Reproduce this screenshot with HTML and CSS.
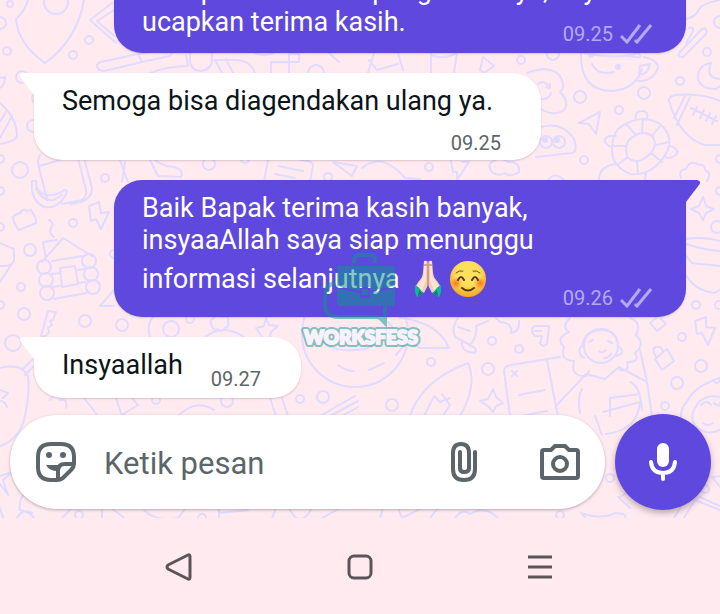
FILE: index.html
```html
<!DOCTYPE html>
<html lang="id">
<head>
  <meta charset="UTF-8" />
  <meta name="viewport" content="width=device-width, initial-scale=1.0"/>
  <title>Chat</title>
  <link rel="stylesheet" href="styles.css">
</head>
<body>
  <main class="chat">
    <!-- doodle wallpaper -->
    <svg class="wallpaper" viewBox="0 0 720 518" width="720" height="518" aria-hidden="true">
      <!-- top left: shield, box, telescope -->
      <path d="M28 0Q25 11 16 19Q18 44 45 63Q77 40 84 0"/>
      <circle cx="56" cy="2" r="12"/>
      <path d="M112 3L90 20L116 43M114 10L97 21L114 36"/>
      <path d="M101 62L138 54L142 62L104 71Q97 70 97 66Q97 63 101 62zM138 54L168 48Q174 52 170 56L142 62"/>
      <path d="M150 73Q168 66 188 66L186 55M190 53V62Q192 71 201 71Q213 69 212 58V52M215 60L222 73M226 59L233 73M215 60H235Q250 60 255 73"/>
      <path d="M271 73V62H299V54H289V73M328 52L339 62L330 54M254 53Q264 57 274 53"/>
      <path d="M0 78L5 77Q5 85 0 88M0 103Q17 118 17 136Q16 141 0 144M12 116L0 138M7 110L0 122"/>
      <path d="M40 155Q37 160 39 168L47 199M39 166L60 160M78 158L86 190Q87 196 82 200L62 204M84 158L92 188Q92 202 70 204"/>
      <path d="M32 181H36Q36 195 50 195Q58 195 64 190Q69 190 65 196Q58 209 44 207Q30 200 32 181zM36 188Q42 202 54 200L62 195"/>
      <path d="M120 160L128 182M125 162L122 182M150 160L158 176L181 177Q184 170 174 167Q162 166 155 160"/>
      <path d="M268 160L264 181M300 160Q314 161 313 166L310 181M278 166L303 171M275 174L295 178M333 162L352 176L357 166z"/>
      <!-- left: bread, bolt, log cabin -->
      <path d="M15 215L20 213Q23 208 27 211L31 210Q37 219 36 223L19 230Q13 223 13 217z"/>
      <path d="M89 206L99 202L101 213L109 212L101 229L96 219L91 221z"/>
      <path d="M49 220Q55 223 51 228Q48 233 54 237"/>
      <path d="M46 259L43 242L57 240M42 262L63 238L92 256M52 261L83 256M52 274L60 273M78 270L84 269M54 299L86 293M52 287L60 286M78 283L85 282M60 268L75 266L78 284L62 287z"/>
      <circle cx="44" cy="267" r="7"/><circle cx="89" cy="261" r="7"/><circle cx="46" cy="280" r="7"/>
      <circle cx="91" cy="274" r="7"/><circle cx="47" cy="293" r="7"/><circle cx="93" cy="287" r="7"/>
      <path d="M0 243L14 249V259Q14 267 0 266M11 265L0 282M114 290L100 306H114M114 250a4 4 0 0 0 0 8"/>
      <path d="M48 311L56 312L53 320L50 321L52 325L48 328L49 332L46 336H41z"/>
      <path d="M150 337Q146 324 153 317M205 337Q224 323 244 337"/>
      <path d="M212 325a4 4 0 0 1 2-7a4 4 0 0 1 8-1a4 4 0 0 1 6 5a4 4 0 0 1-3 6a4 4 0 0 1-7 1a4 4 0 0 1-6-4z"/>
      <path d="M266 318L269 325L278 326L271 332L270 337M266 318L264 326L256 328L262 337"/>
      <path d="M0 368Q22 363 28 376Q30 395 24 420Q18 440 0 446M22 370L34 358M25 375L38 362M0 390l8 3l-5 5M0 401q5 0 7 6"/>
      <path d="M50 400Q58 390 60 400Q68 398 66 408M84 398L98 416M116 398L122 416M132 398L138 405L120 416M178 416Q196 398 214 410M270 398L276 416M282 398L288 416M320 416L355 396M330 416L358 401M342 416L358 407"/>
      <!-- middle -->
      <circle cx="355" cy="334" r="53"/><path d="M318 337Q330 352 355 350Q378 350 384 330M400 318Q438 322 449 348H420M420 348Q400 337 388 322M338 365Q346 371 354 371M369 370L384 363M396 355L408 341"/>
      <path d="M458 318Q451 328 455 337L470 345Q478 335 476 326L488 321M462 340Q460 352 475 353Q478 347 470 346M496 318L500 322Q513 323 511 333Q520 332 519 321M458 327L470 331"/>
      <path d="M532 330Q532 326 537 326H549L547 344Q543 348 540 343L542 336H535Q532 334 532 330zM535 331H541"/>
      <path d="M410 416Q422 380 468 363Q478 385 460 416M424 416L434 396L440 402L450 398M442 394L450 405L443 416"/>
      <path d="M510 416L504 371Q504 366 511 365L560 357M547 360L558 416M519 395L545 390M512 371l5 5M517 371l-5 5M522 416L547 411"/>
      <path d="M493 389L496 397L503 403L496 406L493 412L488 406L480 401L488 399z"/>
      <!-- girl with curly hair -->
      <circle cx="601" cy="346" r="17"/>
      <path d="M582 347Q584 330 601 330Q618 330 618 347M582 345Q576 353 584 358M618 346Q627 352 617 356M589 342l4-2M608 341l4 2M599 351Q602 354 606 350M604 358Q610 358 611 353"/>
      <path d="M570 318Q561 327 569 332Q555 338 564 347Q559 360 574 361Q570 377 586 376L589 371M630 318Q642 322 636 335Q646 344 635 353Q641 362 627 362Q630 372 620 370"/>
      <path d="M586 374L605 379L619 367L647 382L640 350M586 374L557 405M582 389Q577 397 580 413M630 382Q640 385 642 410M610 398L640 394M610 398V416M647 382L652 416M603 412L640 402Q638 430 606 434M595 416L602 435"/>
      <!-- top right: cup, moon, ball, turtle -->
      <path d="M374 53L368 73M398 53L403 70M369 60L377 70L398 64M431 53V73M457 53L454 73M484 73L480 70L483 57L494 66L484 73M431 55Q443 60 457 53"/>
      <path d="M581 53Q580 91 612 91Q636 89 642 69M584 53Q620 60 638 53Q644 58 636 57L625 56M644 57Q658 60 658 68Q652 82 638 81M640 66L650 64Q647 76 639 74zM592 64Q598 76 614 72"/>
      <circle class="fill" cx="591" cy="55" r="2"/><circle class="fill" cx="618" cy="67" r="2"/>
      <path d="M720 0Q700 4 698 11Q695 17 686 19M689 28Q694 26 693 31L686 43M702 29Q708 27 706 34L683 57Q677 58 680 52z"/>
      <path d="M711 63Q698 65 698 78Q700 89 716 89L720 86M711 63Q705 78 720 79"/>
      <path d="M669 101Q668 96 676 95Q702 93 720 101M669 101Q680 138 705 145H720M685 96L674 118M690 97L677 125M691 108L717 121M697 107l-4 8M704 110l-4 8M710 113l-4 8M716 116l-4 8"/>
      <path d="M527 73Q555 63 562 80Q565 88 560 92Q570 102 564 110Q554 117 541 109M538 84Q545 79 550 88M546 87L550 88L550 84M541 99Q549 100 551 93M541 127Q562 121 574 139Q578 152 572 153L536 157"/>
      <circle cx="546" cy="142" r="6"/><circle cx="559" cy="142" r="6"/><circle class="fill" cx="545" cy="140" r="2"/><circle class="fill" cx="557" cy="140" r="2"/>
      <path d="M579 123L600 112L596 134L589 124z"/>
      <path d="M618 129Q640 112 660 124Q676 138 665 155Q652 176 631 174Q612 167 612 150Q612 137 618 129z"/>
      <path d="M628 141Q642 127 653 137Q658 146 650 154Q638 166 628 158Q624 150 628 141zM626 124L635 134M643 120L642 131M660 126L652 136M669 142L656 145M662 162L651 153M638 174L637 161M617 165L628 157M612 146H626M636 120Q634 110 644 111Q650 114 646 120M616 136Q604 135 605 142Q610 149 613 145M669 146Q678 147 677 154Q670 160 665 157M616 164Q599 166 599 180M646 172L645 180"/>
      <path d="M681 178Q678 170 686 169Q690 159 699 165Q705 164 705 170Q712 173 707 181M492 172Q486 164 494 161Q500 156 508 162Q520 161 519 172Q510 178 505 173Q498 177 492 172M451 161L453 172H457V180L469 162H462M362 168Q382 151 405 178L420 179M548 180Q555 171 564 180"/>
      <path d="M703 197L706 206L714 209L706 213L703 220L699 213L691 209L699 206z"/>
      <path d="M686 239Q704 236 720 241M686 244Q704 250 720 251M686 256L692 263L720 266M686 275Q694 290 714 293L720 290"/>
      <path d="M656 318L650 323L657 331L666 324L661 319M695 321L706 317V327L715 328L708 345L702 333L697 334z"/>
      <path d="M655 359L667 349L674 361L662 370zM656 357Q651 348 656 347Q662 346 663 352"/>
      <path d="M720 378Q695 386 688 400Q676 414 684 428M720 397Q707 394 699 402Q686 418 698 428Q708 436 720 430M701 405q6-6 10 0M714 403q6 5 6 0M703 423q5 4 10 0M713 380q4 6 7 0"/>
      <!-- strip around the composer -->
      <path d="M0 484L8 495L3 480L12 472L0 476M0 508L3 518M30 487Q17 500 20 510Q30 512 34 518M17 518Q22 508 32 513M62 518L72 508M102 508V518M112 509Q120 514 124 518M144 510Q155 522 178 518L185 509M219 508V518M219 513L248 510M276 508L272 518M289 508Q300 530 312 508M322 518L340 508M383 508L380 518M398 508L402 518L422 508M438 508L430 518M455 518Q462 508 470 514Q485 505 498 518M581 513Q600 520 616 513Q628 514 625 518M581 513L586 518M618 497L630 508M620 497L634 488M674 518L690 492M684 518L695 500L720 510M695 500L700 497L720 506M712 477L720 487M712 477L720 476"/>
      <g>
        <circle cx="10" cy="4" r="3"/><circle cx="0" cy="23" r="6"/><circle cx="89" cy="40" r="4"/><circle cx="7" cy="51" r="4"/>
        <circle cx="73" cy="55" r="4"/><circle cx="22" cy="77" r="6"/><circle cx="33" cy="126" r="6"/><circle cx="38" cy="98" r="6"/>
        <circle cx="20" cy="170" r="8"/><circle cx="105" cy="178" r="4"/><circle cx="0" cy="159" r="4"/><circle cx="0" cy="191" r="4"/>
        <circle cx="209" cy="164" r="6"/><circle cx="245" cy="159" r="4"/><circle cx="328" cy="177" r="4"/><circle cx="316" cy="73" r="8"/>
        <circle cx="73" cy="223" r="4"/><circle cx="30" cy="250" r="6"/><circle cx="21" cy="287" r="4"/><circle cx="0" cy="227" r="4"/>
        <circle cx="24" cy="314" r="6"/><circle cx="85" cy="321" r="6"/><circle cx="122" cy="325" r="6"/><circle cx="13" cy="343" r="8"/>
        <circle cx="0" cy="305" r="4"/><circle cx="171" cy="329" r="8"/><circle cx="190" cy="319" r="4"/><circle cx="156" cy="400" r="4"/>
        <circle cx="227" cy="401" r="6"/><circle cx="300" cy="399" r="4"/><circle cx="323" cy="397" r="6"/><circle cx="392" cy="405" r="6"/>
        <circle cx="431" cy="362" r="4"/><circle cx="488" cy="369" r="6"/><circle cx="492" cy="341" r="4"/><circle cx="519" cy="349" r="4"/>
        <circle cx="521" cy="60" r="4"/><circle cx="553" cy="54" r="6"/><circle cx="580" cy="97" r="6"/><circle cx="619" cy="110" r="4"/>
        <circle cx="644" cy="93" r="6"/><circle cx="680" cy="81" r="4"/><circle cx="707" cy="52" r="4"/><circle cx="720" cy="22" r="6"/>
        <circle cx="584" cy="160" r="4"/><circle cx="429" cy="167" r="4"/><circle cx="717" cy="227" r="6"/><circle cx="696" cy="305" r="4"/>
        <circle cx="719" cy="305" r="4"/><circle cx="682" cy="337" r="4"/><circle cx="701" cy="366" r="6"/><circle cx="677" cy="383" r="6"/>
        <circle cx="665" cy="406" r="4"/><circle cx="610" cy="478" r="4"/><circle cx="705" cy="489" r="4"/><circle cx="79" cy="515" r="4"/>
        <circle cx="202" cy="518" r="4"/><circle cx="560" cy="515" r="4"/><circle cx="720" cy="159" r="4"/><circle cx="720" cy="191" r="4"/>
      </g>
    </svg>

    <div class="messages">
      <div class="bubble out">
        <p class="text">atas perhatian dan pengertiannya, saya<br>ucapkan terima kasih.</p>
        <div class="meta">
          <time>09.25</time>
          <svg class="ticks" viewBox="0 0 32 20" width="32" height="20" role="img" aria-label="Terkirim"><path d="M1 12L7 18L20 1M15 16L17 18L31 1"/></svg>
        </div>
      </div>

      <div class="bubble in wide">
        <svg class="tail" viewBox="0 0 14 24" width="14" height="24" aria-hidden="true"><path d="M14 0H3Q-2 1 1 5L14 22z"/></svg>
        <p class="text">Semoga bisa diagendakan ulang ya.</p>
        <div class="meta"><time>09.25</time></div>
      </div>

      <div class="bubble out first">
        <svg class="tail" viewBox="0 0 14 24" width="14" height="24" aria-hidden="true"><path d="M0 0H11Q16 1 13 5L0 22z"/></svg>
        <p class="text">Baik Bapak terima kasih banyak,<br>insyaaAllah saya siap menunggu<br>informasi selanjutnya
          <svg class="emoji hands" viewBox="0 0 28 38" width="28" height="38" role="img" aria-label="Terima kasih">
            <path fill="#f3cdb9" d="M10 1Q13 0 14 2Q15 0 18 1L19 12Q19 17 23 21L27 27L18 33L14 26L10 33L1 27L5 21Q9 17 9 12z"/>
            <path fill="#fbe3d3" d="M10 2L12 1L12 20L8 31L2 27L6 22Q10 17 10 12zM18 2L16 1L16 20L20 31L26 27L22 22Q18 17 18 12z"/>
            <path fill="none" stroke="#a8705d" d="M14 1V26M10 5H13M15 5H18"/>
            <path fill="#5e48dd" d="M14 25L18 34H10z"/>
            <path fill="#13b59b" d="M1 25Q6 27 9 34L3 37Q0 32 1 25zM27 25Q22 27 19 34L25 37Q28 32 27 25z"/>
            <path fill="#07806f" d="M5 30L9 34L4 36zM23 30L19 34L24 36z"/>
          </svg>
          <svg class="emoji" viewBox="0 0 38 38" width="38" height="38" role="img" aria-label="Tersenyum">
            <defs>
              <radialGradient id="face" cx="50%" cy="35%" r="65%"><stop offset="0.5" stop-color="#fddf5c"/><stop offset="1" stop-color="#f5a623"/></radialGradient>
              <radialGradient id="blush"><stop offset="0" stop-color="#ff6a1f" stop-opacity="0.9"/><stop offset="1" stop-color="#ff7a1f" stop-opacity="0"/></radialGradient>
            </defs>
            <circle cx="19" cy="19" r="18" fill="url(#face)"/>
            <circle cx="7" cy="23" r="6" fill="url(#blush)"/><circle cx="31" cy="23" r="6" fill="url(#blush)"/>
            <path fill="none" stroke="#54381c" stroke-width="2" stroke-linecap="round" d="M9 20Q12 14 15 20M23 20Q26 14 29 20M13 28Q19 33 25 28"/>
            <path fill="none" stroke="#7a5022" stroke-linecap="round" d="M7 13Q10 10 14 11M24 11Q28 10 31 13"/>
          </svg>
        </p>
        <div class="meta">
          <time>09.26</time>
          <svg class="ticks" viewBox="0 0 32 20" width="32" height="20" role="img" aria-label="Terkirim"><path d="M1 12L7 18L20 1M15 16L17 18L31 1"/></svg>
        </div>

        <svg class="watermark" viewBox="0 0 120 98" width="120" height="98" role="img" aria-label="Worksfess">
          <g opacity="0.5">
            <path class="mark-line" d="M53 10V7Q53 2 58 2H69Q74 2 74 7V10"/>
            <path class="mark-line" d="M34 30Q24 32 24 42V51Q24 64 38 64H75Q79 64 80 66L84 70V52"/>
            <path class="mark-fill" d="M37 13H91Q94 13 94 16V33L69 38V34H59V38L36 33V14zM36 35L59 40V45H69V40L94 35V50Q94 53 91 53H39Q36 53 36 50z"/>
            <path class="mark-fill" d="M61 36H67V42H61z"/>
            <text class="mark-outline" x="60" y="91" text-anchor="middle">WORKSFESS</text>
          </g>
          <text class="mark-text" x="60" y="91" text-anchor="middle">WORKSFESS</text>
        </svg>
      </div>

      <div class="bubble in short">
        <svg class="tail" viewBox="0 0 14 24" width="14" height="24" aria-hidden="true"><path d="M14 0H3Q-2 1 1 5L14 22z"/></svg>
        <p class="text">Insyaallah</p>
        <div class="meta"><time>09.27</time></div>
      </div>
    </div>

    <form class="composer">
      <div class="field">
        <button type="button" class="icon-btn" aria-label="Stiker">
          <svg viewBox="0 0 40 40" width="40" height="40">
            <path d="M2 15Q2 2 15 2H25Q38 2 38 15V22Q38 25 35 28L27 36Q24 38 21 38H15Q2 38 2 25z" fill="none" stroke="currentColor" stroke-width="4"/>
            <circle cx="13" cy="13" r="3" fill="currentColor"/><circle cx="27" cy="13" r="3" fill="currentColor"/>
            <path d="M10 23H26Q22 25 22 29Q13 29 10 23z" fill="currentColor"/>
            <path d="M22 38V29Q22 22 29 22H38" fill="none" stroke="currentColor" stroke-width="4"/>
          </svg>
        </button>
        <input type="text" class="input" placeholder="Ketik pesan" aria-label="Ketik pesan">
        <button type="button" class="icon-btn" aria-label="Lampirkan">
          <svg viewBox="0 0 40 40" width="40" height="40">
            <path d="M31 10V27Q31 38 20 38Q9 38 9 27V11Q9 2 17 2Q25 2 25 11V26Q25 30 20 30Q16 30 16 26V10" fill="none" stroke="currentColor" stroke-width="4" stroke-linecap="round"/>
          </svg>
        </button>
        <button type="button" class="icon-btn" aria-label="Kamera">
          <svg viewBox="0 0 40 40" width="40" height="40">
            <path d="M4 8H11L15 4H25L29 8H36Q38 8 38 10V34Q38 36 36 36H4Q2 36 2 34V10Q2 8 4 8z" fill="none" stroke="currentColor" stroke-width="4"/>
            <circle cx="20" cy="22" r="7" fill="none" stroke="currentColor" stroke-width="4"/>
          </svg>
        </button>
      </div>
      <button type="button" class="mic" aria-label="Pesan suara">
        <svg viewBox="0 0 28 38" width="28" height="38">
          <rect x="8" y="0" width="12" height="24" rx="6" fill="#fff"/>
          <path d="M2 19Q3 30 14 30Q25 30 26 19M14 30V36" fill="none" stroke="#fff" stroke-width="4" stroke-linecap="round"/>
        </svg>
      </button>
    </form>
  </main>

  <nav class="navbar" aria-label="Navigasi sistem">
    <button type="button" aria-label="Kembali">
      <svg viewBox="0 0 28 28" width="28" height="28"><path d="M22 2Q24 1 24 4V24Q24 27 22 26L2 16Q0 14 2 12z"/></svg>
    </button>
    <button type="button" aria-label="Beranda">
      <svg viewBox="0 0 28 28" width="28" height="28"><rect x="3" y="3" width="22" height="22" rx="5"/></svg>
    </button>
    <button type="button" aria-label="Aplikasi terbaru">
      <svg viewBox="0 0 28 28" width="28" height="28"><path d="M2 4H26M2 14H26M2 24H26"/></svg>
    </button>
  </nav>
</body>
</html>
```
FILE: styles.css
```css
* {
  box-sizing: border-box;
}

body {
  font-family: Roboto, "Liberation Sans", sans-serif;
  background-color: #ffeaf0;
  margin: 0;
  height: 100vh;
  display: flex;
  flex-direction: column;
  overflow: hidden;
}

button {
  border: none;
  background: none;
  padding: 0;
  display: flex;
  align-items: center;
  justify-content: center;
}

.chat {
  position: relative;
  flex: 1;
  min-height: 0;
  display: flex;
  flex-direction: column;
  justify-content: flex-end;
  overflow: hidden;
}

.wallpaper {
  position: absolute;
  left: 0;
  bottom: 0;
  fill: none;
  stroke: #e1dbff;
  stroke-width: 2;
  stroke-linecap: round;
  stroke-linejoin: round;
}

.wallpaper .fill {
  fill: #e1dbff;
}

.messages {
  position: relative;
  display: flex;
  flex-direction: column;
  align-items: flex-start;
  gap: 20px;
  padding: 0 34px 16px;
}

.bubble {
  position: relative;
  display: flex;
  flex-direction: column;
  padding: 12px 40px 9px 28px;
  border-radius: 28px;
  box-shadow: 0 1px 2px rgba(60, 40, 60, 0.2);
}

.in {
  background-color: #fff;
  color: #0b1418;
  border-top-left-radius: 0;
}

.out {
  align-self: stretch;
  margin-left: 80px;
  padding-right: 34px;
  background-color: #5e48dd;
  color: #fff;
}

.first {
  border-top-right-radius: 0;
}

.text {
  margin: 0;
  font-size: 27px;
  line-height: 32px;
  white-space: nowrap;
}

.meta {
  display: flex;
  align-items: center;
  align-self: flex-end;
  gap: 7px;
  font-size: 20px;
  line-height: 20px;
  color: #5b656a;
}

.out .meta {
  margin-top: -14px;
  color: #b4a8f0;
}

.first .meta {
  margin-top: -10px;
}

.wide {
  padding-bottom: 7px;
}

.wide .text {
  padding-right: 8px;
}

.wide .meta {
  margin-top: 16px;
}

.short {
  flex-direction: row;
  gap: 28px;
}

.short .text {
  padding-bottom: 8px;
}

.ticks {
  fill: none;
  stroke: currentColor;
  stroke-width: 3;
}

.tail {
  position: absolute;
  top: 0;
}

.in .tail {
  right: 100%;
  fill: #fff;
}

.out .tail {
  left: 100%;
  fill: #5e48dd;
}

.emoji {
  vertical-align: -10px;
  margin-top: 4px;
}

.hands {
  margin-left: 8px;
}

.watermark {
  position: absolute;
  left: 187px;
  top: 73px;
  z-index: 1;
  overflow: visible;
}

.mark-line {
  fill: none;
  stroke: #0b988c;
  stroke-width: 4;
}

.mark-fill {
  fill: #0b988c;
}

.mark-outline,
.mark-text {
  font-family: Lato, sans-serif;
  font-size: 19px;
  font-weight: 900;
  stroke-linejoin: round;
}

.mark-outline {
  fill: #0b988c;
  stroke: #0b988c;
  stroke-width: 6;
}

.mark-text {
  fill: #f7f1fb;
  stroke: #f7f1fb;
  stroke-width: 2;
}

.composer {
  position: relative;
  display: flex;
  align-items: center;
  gap: 10px;
  padding: 0 9px 8px 10px;
}

.field {
  flex: 1;
  min-width: 0;
  display: flex;
  align-items: center;
  height: 94px;
  padding: 0 25px 0 26px;
  background-color: #fff;
  border-radius: 47px;
  box-shadow: 0 1px 3px rgba(60, 40, 60, 0.35);
}

.icon-btn {
  color: #5b656a;
}

.input {
  flex: 1;
  min-width: 0;
  margin: 0 28px;
  padding: 2px 0 0;
  border: none;
  outline: none;
  background: none;
  font-family: inherit;
  font-size: 31px;
  color: #0b1418;
}

.input::placeholder {
  color: #5b656a;
  opacity: 1;
}

.icon-btn + .icon-btn {
  margin-left: 56px;
}

.mic {
  width: 96px;
  height: 96px;
  border-radius: 50%;
  background-color: #5e48dd;
  box-shadow: 0 3px 6px rgba(60, 40, 60, 0.35);
}

.navbar {
  display: flex;
  align-items: center;
  justify-content: space-evenly;
  height: 96px;
  padding: 2px 14px 0;
}

.navbar svg {
  fill: none;
  stroke: #5c5458;
  stroke-width: 3;
  stroke-linejoin: round;
  overflow: visible;
}
```
